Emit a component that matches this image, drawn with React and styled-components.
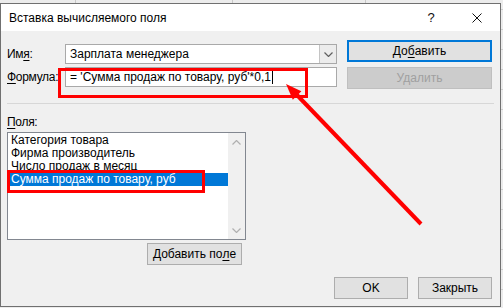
import React from "react";
import styled, { createGlobalStyle } from "styled-components";

const GlobalStyle = createGlobalStyle`
  html, body { margin: 0; padding: 0; }
  body {
    width: 503px;
    height: 308px;
    overflow: hidden;
    font-family: "Liberation Sans", Arial, sans-serif;
    font-size: 12px;
    color: #000;
  }
`;

const Desk = styled.div`
  position: relative;
  width: 503px;
  height: 308px;
  box-sizing: border-box;
  padding-top: 3px;
  background-color: #ececec;
  background-image:
    linear-gradient(#c8c8c8, #c8c8c8),
    linear-gradient(#c8c8c8, #c8c8c8),
    linear-gradient(#c8c8c8, #c8c8c8),
    repeating-linear-gradient(to bottom, transparent 0 19px, #cfcfcf 19px 20px);
  background-size: 1px 3px, 1px 3px, 1px 3px, 100% 100%;
  background-position: 75px 0, 232px 0, 365px 0, 0 -10px;
  background-repeat: no-repeat;
`;

const Dialog = styled.div`
  width: 501px;
  height: 304px;
  box-sizing: border-box;
  border: 1px solid #707070;
  background: #f0f0f0;
  display: flex;
  flex-direction: column;
`;

const TitleBar = styled.div`
  height: 27px;
  flex: none;
  background: #fff;
  display: flex;
  align-items: center;
  padding-left: 8px;
`;

const Title = styled.div`
  flex: 1;
  font-size: 12px;
  line-height: 16px;
  padding-top: 1px;
`;

const CaptionButton = styled.div`
  width: 46px;
  height: 27px;
  display: flex;
  align-items: center;
  justify-content: center;
  font-size: 13px;
  color: #111;
`;

const Body = styled.div`
  flex: 1;
  padding: 9px 8px 0 6px;
  display: flex;
  flex-direction: column;
`;

const TopSection = styled.div`
  display: flex;
  gap: 10px;
`;

const Form = styled.div`
  display: grid;
  grid-template-columns: 58px 272px;
  grid-auto-rows: 20px;
  row-gap: 3px;
  margin-top: 4px;
  align-items: center;
`;

const Label = styled.div`
  line-height: 16px;
  white-space: nowrap;
  letter-spacing: -0.3px;
`;

const Key = styled.span`
  text-decoration: underline;
  text-underline-offset: 2px;
`;

const ComboBox = styled.div`
  height: 20px;
  box-sizing: border-box;
  border: 1px solid #a9a9a9;
  background: #fff;
  display: flex;
`;

const FieldText = styled.div`
  flex: 1;
  padding-left: 4px;
  line-height: 18px;
  white-space: nowrap;
  overflow: hidden;
  display: flex;
  align-items: center;
`;

const Caret = styled.span`
  display: inline-block;
  width: 1px;
  height: 13px;
  background: #000;
  margin-left: 1px;
`;

const DropButton = styled.div`
  width: 16px;
  border-left: 1px solid #c4c4c4;
  background: #ececec;
  display: flex;
  align-items: center;
  justify-content: center;
`;

const TextInput = styled.div`
  height: 20px;
  box-sizing: border-box;
  border: 1px solid #a9a9a9;
  background: #fff;
  display: flex;
`;

const SideButtons = styled.div`
  display: flex;
  flex-direction: column;
  gap: 5px;
  width: 145px;
`;

const Button = styled.div`
  box-sizing: border-box;
  height: 22px;
  width: ${(p) => p.$w || "auto"};
  border: ${(p) => (p.$default ? "2px solid #0078d7" : `1px solid ${p.$disabled ? "#bfbfbf" : "#adadad"}`)};
  background: ${(p) => (p.$disabled ? "#cccccc" : "#e1e1e1")};
  color: ${(p) => (p.$disabled ? "#a0a0a0" : "#000")};
  display: flex;
  align-items: center;
  justify-content: center;
  line-height: 16px;
  white-space: nowrap;
`;

const Separator = styled.div`
  width: 487px;
  height: 1px;
  background: #d7d7d7;
  margin-top: 14px;
`;

const FieldsLabel = styled(Label)`
  margin-top: 10px;
`;

const ListBox = styled.div`
  margin-top: 2px;
  width: 239px;
  height: 108px;
  box-sizing: border-box;
  border: 1px solid #828790;
  display: flex;
`;

const ListItems = styled.div`
  flex: 1;
  background: #fff;
  padding-top: 1px;
`;

const ListItem = styled.div`
  height: 13px;
  line-height: 13px;
  padding-left: 3px;
  white-space: nowrap;
  background: ${(p) => (p.$selected ? "#0078d7" : "transparent")};
  color: ${(p) => (p.$selected ? "#fff" : "#000")};
`;

const ScrollBar = styled.div`
  width: 17px;
  background: #f0f0f0;
  display: flex;
  flex-direction: column;
  justify-content: space-between;
  align-items: center;
  padding: 7px 0 6px;
  box-sizing: border-box;
`;

const AddFieldRow = styled.div`
  width: 235px;
  display: flex;
  justify-content: flex-end;
  margin-top: 3px;
`;

const Footer = styled.div`
  display: flex;
  justify-content: flex-end;
  gap: 10px;
  margin-top: 12px;
`;

const Highlight = styled.div`
  position: absolute;
  left: ${(p) => p.$x}px;
  top: ${(p) => p.$y}px;
  width: ${(p) => p.$w}px;
  height: ${(p) => p.$h}px;
  box-sizing: border-box;
  border: 3px solid #ff0000;
  pointer-events: none;
`;

const ArrowLayer = styled.svg`
  position: absolute;
  left: 0;
  top: 0;
  pointer-events: none;
`;

const Chevron = ({ up, color = "#606060" }) => (
  <svg width="9" height="5" viewBox="0 0 9 5">
    <polyline
      points={up ? "0.5,4.5 4.5,0.5 8.5,4.5" : "0.5,0.5 4.5,4.5 8.5,0.5"}
      fill="none"
      stroke={color}
      strokeWidth="1.2"
    />
  </svg>
);

const CloseIcon = () => (
  <svg width="10" height="10" viewBox="0 0 10 10">
    <path d="M0.5 0.5 L9.5 9.5 M9.5 0.5 L0.5 9.5" stroke="#111" strokeWidth="1" />
  </svg>
);

const fields = [
  "Категория товара",
  "Фирма производитель",
  "Число продаж в месяц",
  "Сумма продаж по товару, руб",
];

export default function App() {
  return (
    <>
      <GlobalStyle />
      <Desk>
        <Dialog>
          <TitleBar>
            <Title>Вставка вычисляемого поля</Title>
            <CaptionButton>?</CaptionButton>
            <CaptionButton>
              <CloseIcon />
            </CaptionButton>
          </TitleBar>
          <Body>
            <TopSection>
              <Form>
                <Label>
                  Им<Key>я</Key>:
                </Label>
                <ComboBox>
                  <FieldText>Зарплата менеджера</FieldText>
                  <DropButton>
                    <Chevron />
                  </DropButton>
                </ComboBox>
                <Label>
                  <Key>Ф</Key>ормула:
                </Label>
                <TextInput>
                  <FieldText>
                    = 'Сумма продаж по товару, руб'*0,1
                    <Caret />
                  </FieldText>
                </TextInput>
              </Form>
              <SideButtons>
                <Button $default>
                  До<Key>б</Key>авить
                </Button>
                <Button $disabled>Удалить</Button>
              </SideButtons>
            </TopSection>
            <Separator />
            <FieldsLabel>
              <Key>П</Key>оля:
            </FieldsLabel>
            <ListBox>
              <ListItems>
                {fields.map((f, i) => (
                  <ListItem key={f} $selected={i === 3}>
                    {f}
                  </ListItem>
                ))}
              </ListItems>
              <ScrollBar>
                <Chevron up color="#b0b0b0" />
                <Chevron color="#b0b0b0" />
              </ScrollBar>
            </ListBox>
            <AddFieldRow>
              <Button $w="95px">
                Добавить по<Key>л</Key>е
              </Button>
            </AddFieldRow>
            <Footer>
              <Button $w="74px">OK</Button>
              <Button $w="74px">Закрыть</Button>
            </Footer>
          </Body>
        </Dialog>
        <Highlight $x={58} $y={68} $w={250} $h={30} />
        <Highlight $x={7} $y={170} $w={198} $h={23} />
        <ArrowLayer width="503" height="308" viewBox="0 0 503 308">
          <line x1="421" y1="224" x2="296" y2="94" stroke="#ff0000" strokeWidth="4" />
          <polygon points="286,84 301.4,91.3 292.8,99.7" fill="#ff0000" />
        </ArrowLayer>
      </Desk>
    </>
  );
}
